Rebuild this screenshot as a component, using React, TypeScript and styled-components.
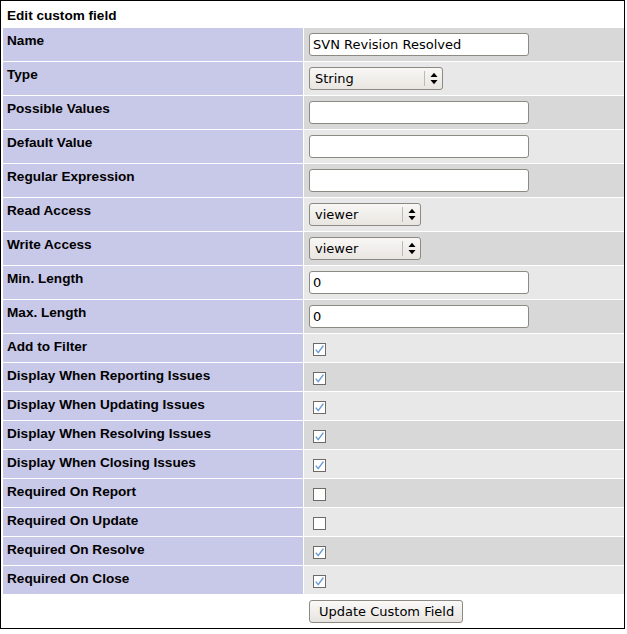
import styled, { createGlobalStyle } from "styled-components";

const GlobalStyle = createGlobalStyle`
  body {
    margin: 0;
    background: #fff;
  }
`;

const Form = styled.div`
  display: grid;
  grid-template-columns: 300px 320px;
  gap: 1px;
  width: fit-content;
  border: 1px solid #000;
  padding: 1px 0 0 2px;
  background: #fff;
  font-family: "Liberation Sans", Arial, sans-serif;
  color: #000;
`;

const Title = styled.div`
  grid-column: 1 / -1;
  height: 25px;
  box-sizing: border-box;
  display: flex;
  align-items: center;
  padding: 2px 4px 0;
  font-size: 13.6px;
  font-weight: bold;
`;

const Label = styled.div<{ $blank?: boolean }>`
  background: ${(p) => (p.$blank ? "#fff" : "#c8c8e8")};
  padding: 5px 4px 0;
  font-size: 13.6px;
  line-height: 15px;
  font-weight: bold;
`;

const Value = styled.div<{ $alt?: number }>`
  background: ${(p) =>
    p.$alt === undefined ? "#fff" : p.$alt % 2 === 0 ? "#d8d8d8" : "#e8e8e8"};
  padding: 5px;
  display: flex;
  align-items: flex-start;
`;

const TextInput = styled.input`
  box-sizing: border-box;
  width: 220px;
  height: 23px;
  margin: 0;
  padding: 0 3px;
  border: 1px solid #8d8983;
  border-radius: 3px;
  background: #fff;
  font-family: "DejaVu Sans", sans-serif;
  font-size: 13px;
  color: #000;
  outline: none;
`;

const Select = styled.div<{ $w: number }>`
  box-sizing: border-box;
  width: ${(p) => p.$w}px;
  height: 23px;
  display: flex;
  align-items: stretch;
  border: 1px solid #8d8983;
  border-radius: 3px;
  background: linear-gradient(#f8f7f5, #e9e6e1);
  font-family: "DejaVu Sans", sans-serif;
  font-size: 13px;
`;

const SelectText = styled.span`
  flex: 1;
  display: flex;
  align-items: center;
  padding-left: 5px;
`;

const Sep = styled.span`
  width: 1px;
  margin: 3px 0;
  background: #bdb9b3;
`;

const Arrows = styled.span`
  width: 17px;
  display: flex;
  align-items: center;
  justify-content: center;
`;

const CheckCell = styled(Value)`
  padding: 9px 0 6px 9px;
`;

const Box = styled.span`
  box-sizing: border-box;
  width: 13px;
  height: 13px;
  border: 1px solid #6e6a64;
  background: #fff;
  display: flex;
`;

const Button = styled.button`
  height: 23px;
  margin: 0;
  padding: 0 8px 0 9px;
  border: 1px solid #8d8983;
  border-radius: 3px;
  background: linear-gradient(#faf9f8, #e7e4df);
  font-family: "DejaVu Sans", sans-serif;
  font-size: 13px;
  color: #000;
`;

function SelectBox({ value, width }: { value: string; width: number }) {
  return (
    <Select $w={width}>
      <SelectText>{value}</SelectText>
      <Sep />
      <Arrows>
        <svg width="8" height="13" viewBox="0 0 8 13">
          <path d="M0.5 5 L4 0.8 L7.5 5 Z" fill="#000" />
          <path d="M0.5 8 L4 12.2 L7.5 8 Z" fill="#000" />
        </svg>
      </Arrows>
    </Select>
  );
}

function Check({ on }: { on: boolean }) {
  return (
    <Box>
      {on && (
        <svg width="11" height="11" viewBox="0 0 11 11">
          <path
            d="M1.8 5.6 L4.2 8.6 L9.4 1.6"
            fill="none"
            stroke="#6b9ad6"
            strokeWidth="1.5"
          />
        </svg>
      )}
    </Box>
  );
}

type Field =
  | { label: string; kind: "text"; value: string }
  | { label: string; kind: "select"; value: string; width: number }
  | { label: string; kind: "check"; on: boolean };

const fields: Field[] = [
  { label: "Name", kind: "text", value: "SVN Revision Resolved" },
  { label: "Type", kind: "select", value: "String", width: 134 },
  { label: "Possible Values", kind: "text", value: "" },
  { label: "Default Value", kind: "text", value: "" },
  { label: "Regular Expression", kind: "text", value: "" },
  { label: "Read Access", kind: "select", value: "viewer", width: 112 },
  { label: "Write Access", kind: "select", value: "viewer", width: 112 },
  { label: "Min. Length", kind: "text", value: "0" },
  { label: "Max. Length", kind: "text", value: "0" },
  { label: "Add to Filter", kind: "check", on: true },
  { label: "Display When Reporting Issues", kind: "check", on: true },
  { label: "Display When Updating Issues", kind: "check", on: true },
  { label: "Display When Resolving Issues", kind: "check", on: true },
  { label: "Display When Closing Issues", kind: "check", on: true },
  { label: "Required On Report", kind: "check", on: false },
  { label: "Required On Update", kind: "check", on: false },
  { label: "Required On Resolve", kind: "check", on: true },
  { label: "Required On Close", kind: "check", on: true },
];

function App() {
  return (
    <>
      <GlobalStyle />
      <Form>
        <Title>Edit custom field</Title>
        {fields.map((f, i) => [
          <Label key={f.label + "l"}>{f.label}</Label>,
          f.kind === "check" ? (
            <CheckCell key={f.label + "v"} $alt={i}>
              <Check on={f.on} />
            </CheckCell>
          ) : (
            <Value key={f.label + "v"} $alt={i}>
              {f.kind === "text" ? (
                <TextInput defaultValue={f.value} />
              ) : (
                <SelectBox value={f.value} width={f.width} />
              )}
            </Value>
          ),
        ])}
        <Label $blank />
        <Value>
          <Button>Update Custom Field</Button>
        </Value>
      </Form>
    </>
  );
}

export default App;
